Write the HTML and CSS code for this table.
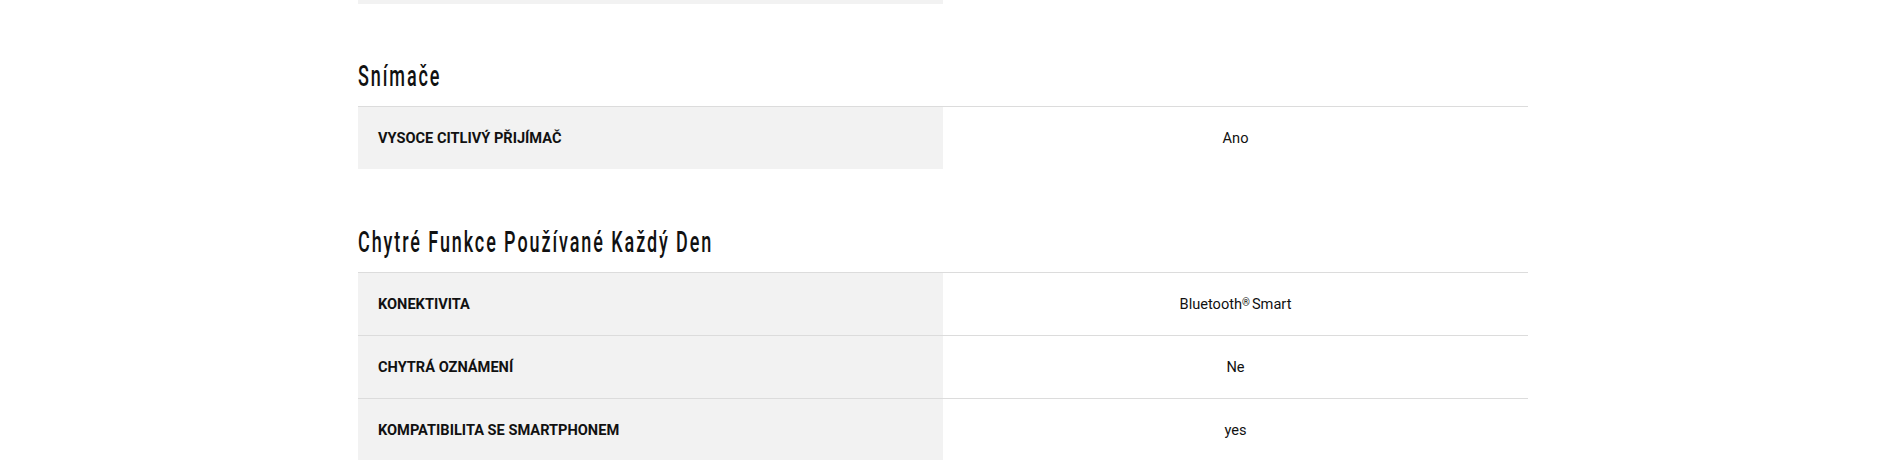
FILE: index.html
```html
<!DOCTYPE html>
<html lang="cs">
<head>
<meta charset="utf-8">
<title>Specifikace</title>
<link rel="stylesheet" href="styles.css">
</head>
<body>
<div class="container">
  <div class="spec-table prev">
    <div class="spec-row stub"><div class="spec-label"></div><div class="spec-value"></div></div>
  </div>

  <section class="spec-section first">
    <h2 class="spec-title"><span>Snímače</span></h2>
    <div class="spec-table">
      <div class="spec-row"><div class="spec-label">VYSOCE CITLIVÝ PŘIJÍMAČ</div><div class="spec-value">Ano</div></div>
    </div>
  </section>

  <section class="spec-section">
    <h2 class="spec-title"><span>Chytré Funkce Používané Každý Den</span></h2>
    <div class="spec-table">
      <div class="spec-row"><div class="spec-label">KONEKTIVITA</div><div class="spec-value">Bluetooth<sup>®</sup> Smart</div></div>
      <div class="spec-row"><div class="spec-label">CHYTRÁ OZNÁMENÍ</div><div class="spec-value">Ne</div></div>
      <div class="spec-row"><div class="spec-label">KOMPATIBILITA SE SMARTPHONEM</div><div class="spec-value">yes</div></div>
    </div>
  </section>
</div>
</body>
</html>
```

FILE: styles.css
```css
html, body {
  margin: 0;
  padding: 0;
  background: #ffffff;
}
body {
  font-family: Roboto, "Liberation Sans", Arial, sans-serif;
  color: #111111;
}
.container {
  width: 1170px;
  margin-left: calc(50% - 587px);
}
.spec-section {
  padding-top: 55px;
}
.spec-section.first {
  padding-top: 54px;
}
.spec-title {
  margin: 0 0 12px 0;
  font-family: Roboto, "Liberation Sans", sans-serif;
  font-weight: 500;
  font-size: 29px;
  line-height: 36px;
  color: #111111;
  white-space: nowrap;
}
.spec-title span {
  display: inline-block;
  transform: scaleX(0.62);
  transform-origin: left center;
  letter-spacing: 3.1px;
}
.spec-table {
  display: flex;
  flex-direction: column;
}
.spec-row {
  display: grid;
  grid-template-columns: 1fr 1fr;
  border-top: 1px solid #dcdcdc;
  height: 62px;
}
.spec-row.stub {
  height: 4px;
  border-top: none;
}
.spec-label {
  background: #f2f2f2;
  display: flex;
  align-items: center;
  padding-left: 20px;
  font-weight: 700;
  font-size: 14.6px;
  color: #111111;
}
.spec-value {
  display: flex;
  align-items: center;
  justify-content: center;
  font-size: 14.6px;
  color: #111111;
}
.spec-value sup {
  font-size: 10px;
  line-height: 0;
  position: relative;
  top: -1px;
  margin-right: 2px;
}
```
